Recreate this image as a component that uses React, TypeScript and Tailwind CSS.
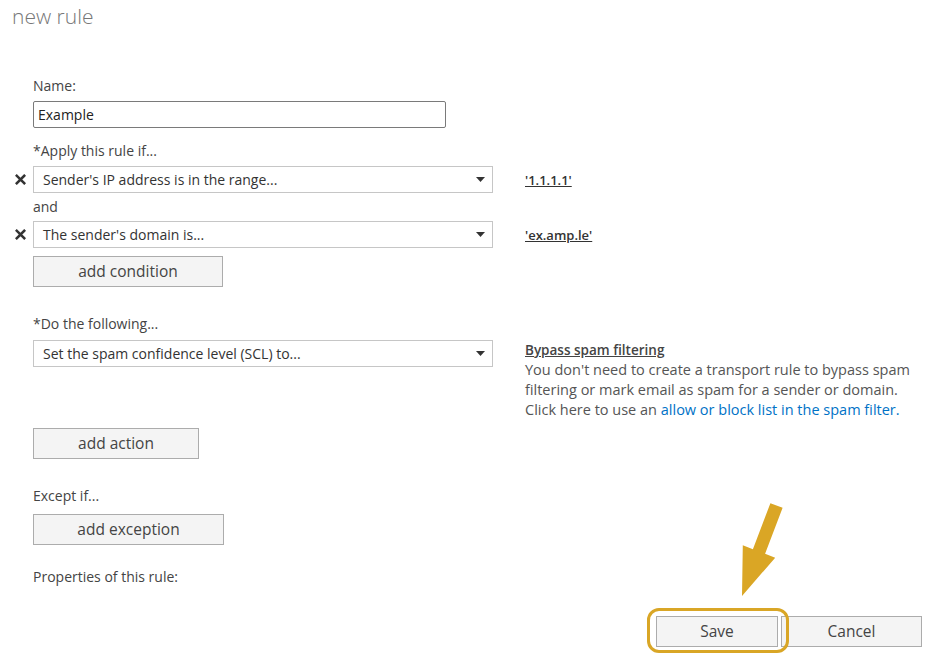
import React from "react";

const font = { fontFamily: '"Open Sans", "Noto Sans", sans-serif' };

function RemoveIcon() {
  return (
    <svg width="11" height="11" viewBox="0 0 11 11" className="shrink-0">
      <path d="M1.8 1.8 L9.2 9.2 M9.2 1.8 L1.8 9.2" stroke="#333" strokeWidth="2.6" strokeLinecap="square" />
    </svg>
  );
}

function Caret() {
  return (
    <svg width="9" height="5" viewBox="0 0 9 5">
      <path d="M0 0 H9 L4.5 5 Z" fill="#333" />
    </svg>
  );
}

function Select({ value }: { value: string }) {
  return (
    <div className="flex h-[27px] w-[460px] shrink-0 items-center justify-between border border-[#c6c6c6] bg-white pl-[9px] pr-[7px] text-[14px] text-[#333]">
      <span>{value}</span>
      <Caret />
    </div>
  );
}

function GrayButton({ label, width }: { label: string; width: string }) {
  return (
    <button className={`flex h-[31px] items-center justify-center border border-[#acacac] bg-[#f4f4f4] text-[15.5px] text-[#444] ${width}`}>
      {label}
    </button>
  );
}

function ValueLink({ text }: { text: string }) {
  return <span className="text-[13px] font-semibold text-[#333] underline">{text}</span>;
}

function RemoveSlot() {
  return (
    <div className="flex w-[33px] shrink-0 justify-start pl-[15px]">
      <RemoveIcon />
    </div>
  );
}

export default function App() {
  return (
    <div className="relative h-[654px] w-[929px] overflow-hidden bg-white text-[#444]" style={font}>
      <h1 className="pl-3 pt-[2px] text-[21px] font-light leading-[28px] text-[#777]">new rule</h1>

      <div className="mt-[47px] flex flex-col text-[14px]">
        <div className="pl-[33px] leading-[18px]">Name:</div>
        <div className="mt-[6px] pl-[33px]">
          <div className="flex h-[27px] w-[413px] items-center rounded-[2px] border border-[#7a7a7a] pl-[4px] text-[14px] text-[#222]">
            Example
          </div>
        </div>

        <div className="mt-[14px] pl-[33px] leading-[18px]">*Apply this rule if...</div>
        <div className="mt-[6px] flex items-center">
          <RemoveSlot />
          <Select value="Sender's IP address is in the range..." />
          <div className="ml-[32px]">
            <ValueLink text="'1.1.1.1'" />
          </div>
        </div>

        <div className="mt-[5px] pl-[33px] leading-[18px]">and</div>
        <div className="mt-[5px] flex items-center">
          <RemoveSlot />
          <Select value="The sender's domain is..." />
          <div className="ml-[32px]">
            <ValueLink text="'ex.amp.le'" />
          </div>
        </div>

        <div className="mt-[8px] pl-[33px]">
          <GrayButton label="add condition" width="w-[190px]" />
        </div>

        <div className="mt-[28px] pl-[33px] leading-[18px]">*Do the following...</div>
        <div className="mt-[7px] flex items-start pl-[33px]">
          <div className="flex flex-col">
            <Select value="Set the spam confidence level (SCL) to..." />
            <div className="mt-[61px]">
              <GrayButton label="add action" width="w-[166px]" />
            </div>
          </div>
          <div className="ml-[32px] whitespace-nowrap text-[14.5px] leading-[20px] text-[#555]">
            <div className="text-[13.5px] font-semibold text-[#444] underline">Bypass spam filtering</div>
            <div>You don't need to create a transport rule to bypass spam</div>
            <div>filtering or mark email as spam for a sender or domain.</div>
            <div>
              Click here to use an <span className="text-[#0072c6]">allow or block list in the spam filter.</span>
            </div>
          </div>
        </div>

        <div className="mt-[28px] pl-[33px] leading-[18px]">Except if...</div>
        <div className="mt-[9px] pl-[33px]">
          <GrayButton label="add exception" width="w-[191px]" />
        </div>

        <div className="mt-[23px] pl-[33px] leading-[18px]">Properties of this rule:</div>

        <div className="mt-[30px] flex justify-end gap-[3px] pr-[7px]">
          <GrayButton label="Save" width="w-[122px]" />
          <GrayButton label="Cancel" width="w-[141px]" />
        </div>
      </div>

      {/* callout annotation */}
      <div className="pointer-events-none absolute left-[647px] top-[608px] h-[45px] w-[142px] rounded-[12px] border-[3px] border-[#d9a626]" />
      <svg className="pointer-events-none absolute left-0 top-0" width="929" height="654" viewBox="0 0 929 654">
        <polygon
          points="770.4,503.2 782.6,507.8 765.1,553.8 775.2,557.7 742,596 742.8,545.3 752.9,549.2"
          fill="#daa625"
        />
      </svg>
    </div>
  );
}
